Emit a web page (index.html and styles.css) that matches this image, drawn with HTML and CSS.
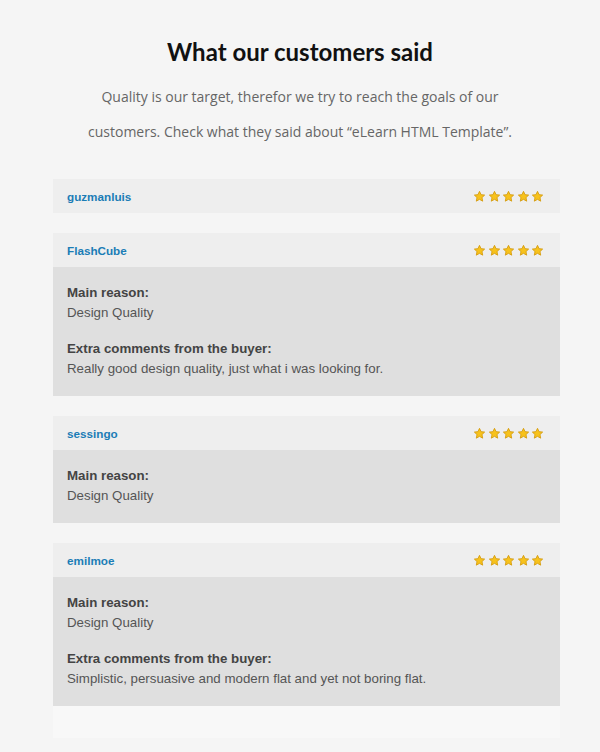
FILE: index.html
```html
<!DOCTYPE html>
<html lang="en">

<head>
    <meta charset="UTF-8">
    <meta name="viewport" content="width=device-width, initial-scale=1.0">
    <title>Testimonials</title>
    <link rel="stylesheet" href="styles.css">
</head>

<body>
    <section class="reviews">
        <h1 class="reviews-title">What our customers said</h1>
        <p class="reviews-intro">Quality is our target, therefor we try to reach the goals of our customers. Check what they said about &ldquo;eLearn HTML Template&rdquo;.</p>

        <div class="review-list">
            <div class="review">
                <div class="review-head">
                    <span class="review-name">guzmanluis</span>
                    <span class="stars">
                        <svg class="star" viewBox="0 0 24 24"><path d="M12 2.5l2.9 6.1 6.6.8-4.9 4.6 1.3 6.6L12 17.3l-5.9 3.3 1.3-6.6-4.9-4.6 6.6-.8z"/></svg>
                        <svg class="star" viewBox="0 0 24 24"><path d="M12 2.5l2.9 6.1 6.6.8-4.9 4.6 1.3 6.6L12 17.3l-5.9 3.3 1.3-6.6-4.9-4.6 6.6-.8z"/></svg>
                        <svg class="star" viewBox="0 0 24 24"><path d="M12 2.5l2.9 6.1 6.6.8-4.9 4.6 1.3 6.6L12 17.3l-5.9 3.3 1.3-6.6-4.9-4.6 6.6-.8z"/></svg>
                        <svg class="star" viewBox="0 0 24 24"><path d="M12 2.5l2.9 6.1 6.6.8-4.9 4.6 1.3 6.6L12 17.3l-5.9 3.3 1.3-6.6-4.9-4.6 6.6-.8z"/></svg>
                        <svg class="star" viewBox="0 0 24 24"><path d="M12 2.5l2.9 6.1 6.6.8-4.9 4.6 1.3 6.6L12 17.3l-5.9 3.3 1.3-6.6-4.9-4.6 6.6-.8z"/></svg>
                    </span>
                </div>
            </div>

            <div class="review">
                <div class="review-head">
                    <span class="review-name">FlashCube</span>
                    <span class="stars">
                        <svg class="star" viewBox="0 0 24 24"><path d="M12 2.5l2.9 6.1 6.6.8-4.9 4.6 1.3 6.6L12 17.3l-5.9 3.3 1.3-6.6-4.9-4.6 6.6-.8z"/></svg>
                        <svg class="star" viewBox="0 0 24 24"><path d="M12 2.5l2.9 6.1 6.6.8-4.9 4.6 1.3 6.6L12 17.3l-5.9 3.3 1.3-6.6-4.9-4.6 6.6-.8z"/></svg>
                        <svg class="star" viewBox="0 0 24 24"><path d="M12 2.5l2.9 6.1 6.6.8-4.9 4.6 1.3 6.6L12 17.3l-5.9 3.3 1.3-6.6-4.9-4.6 6.6-.8z"/></svg>
                        <svg class="star" viewBox="0 0 24 24"><path d="M12 2.5l2.9 6.1 6.6.8-4.9 4.6 1.3 6.6L12 17.3l-5.9 3.3 1.3-6.6-4.9-4.6 6.6-.8z"/></svg>
                        <svg class="star" viewBox="0 0 24 24"><path d="M12 2.5l2.9 6.1 6.6.8-4.9 4.6 1.3 6.6L12 17.3l-5.9 3.3 1.3-6.6-4.9-4.6 6.6-.8z"/></svg>
                    </span>
                </div>
                <div class="review-body">
                    <p class="label">Main reason:</p>
                    <p class="value">Design Quality</p>
                    <p class="label">Extra comments from the buyer:</p>
                    <p class="value">Really good design quality, just what i was looking for.</p>
                </div>
            </div>

            <div class="review">
                <div class="review-head">
                    <span class="review-name">sessingo</span>
                    <span class="stars">
                        <svg class="star" viewBox="0 0 24 24"><path d="M12 2.5l2.9 6.1 6.6.8-4.9 4.6 1.3 6.6L12 17.3l-5.9 3.3 1.3-6.6-4.9-4.6 6.6-.8z"/></svg>
                        <svg class="star" viewBox="0 0 24 24"><path d="M12 2.5l2.9 6.1 6.6.8-4.9 4.6 1.3 6.6L12 17.3l-5.9 3.3 1.3-6.6-4.9-4.6 6.6-.8z"/></svg>
                        <svg class="star" viewBox="0 0 24 24"><path d="M12 2.5l2.9 6.1 6.6.8-4.9 4.6 1.3 6.6L12 17.3l-5.9 3.3 1.3-6.6-4.9-4.6 6.6-.8z"/></svg>
                        <svg class="star" viewBox="0 0 24 24"><path d="M12 2.5l2.9 6.1 6.6.8-4.9 4.6 1.3 6.6L12 17.3l-5.9 3.3 1.3-6.6-4.9-4.6 6.6-.8z"/></svg>
                        <svg class="star" viewBox="0 0 24 24"><path d="M12 2.5l2.9 6.1 6.6.8-4.9 4.6 1.3 6.6L12 17.3l-5.9 3.3 1.3-6.6-4.9-4.6 6.6-.8z"/></svg>
                    </span>
                </div>
                <div class="review-body">
                    <p class="label">Main reason:</p>
                    <p class="value">Design Quality</p>
                </div>
            </div>

            <div class="review">
                <div class="review-head">
                    <span class="review-name">emilmoe</span>
                    <span class="stars">
                        <svg class="star" viewBox="0 0 24 24"><path d="M12 2.5l2.9 6.1 6.6.8-4.9 4.6 1.3 6.6L12 17.3l-5.9 3.3 1.3-6.6-4.9-4.6 6.6-.8z"/></svg>
                        <svg class="star" viewBox="0 0 24 24"><path d="M12 2.5l2.9 6.1 6.6.8-4.9 4.6 1.3 6.6L12 17.3l-5.9 3.3 1.3-6.6-4.9-4.6 6.6-.8z"/></svg>
                        <svg class="star" viewBox="0 0 24 24"><path d="M12 2.5l2.9 6.1 6.6.8-4.9 4.6 1.3 6.6L12 17.3l-5.9 3.3 1.3-6.6-4.9-4.6 6.6-.8z"/></svg>
                        <svg class="star" viewBox="0 0 24 24"><path d="M12 2.5l2.9 6.1 6.6.8-4.9 4.6 1.3 6.6L12 17.3l-5.9 3.3 1.3-6.6-4.9-4.6 6.6-.8z"/></svg>
                        <svg class="star" viewBox="0 0 24 24"><path d="M12 2.5l2.9 6.1 6.6.8-4.9 4.6 1.3 6.6L12 17.3l-5.9 3.3 1.3-6.6-4.9-4.6 6.6-.8z"/></svg>
                    </span>
                </div>
                <div class="review-body">
                    <p class="label">Main reason:</p>
                    <p class="value">Design Quality</p>
                    <p class="label">Extra comments from the buyer:</p>
                    <p class="value">Simplistic, persuasive and modern flat and yet not boring flat.</p>
                </div>
            </div>

            <div class="reviews-more"></div>
        </div>
    </section>
</body>

</html>
```

FILE: styles.css
```css
body {
    margin: 0;
    background-color: #f5f5f5;
    font-family: 'Liberation Sans', Arial, sans-serif;
}

.reviews {
    padding: 38px 0 15px;
}

.reviews-title {
    margin: 0;
    text-align: center;
    font-family: Lato, 'Open Sans', sans-serif;
    font-size: 24px;
    font-weight: 700;
    color: #111;
    line-height: 28px;
}

.reviews-intro {
    max-width: 440px;
    margin: 13px auto 30px;
    text-align: center;
    font-family: 'Open Sans', Lato, sans-serif;
    font-size: 14px;
    line-height: 35px;
    color: #666;
}

.review-list {
    width: 507px;
    margin-left: 53px;
}

.review {
    margin-bottom: 20px;
}

.review-head {
    display: flex;
    align-items: center;
    justify-content: space-between;
    height: 34px;
    padding: 0 16px 0 14px;
    background-color: #eeeeee;
}

.review-name {
    font-size: 11.7px;
    font-weight: bold;
    color: #1b7db6;
}

.stars {
    display: flex;
    gap: 1.5px;
}

.star {
    width: 13px;
    height: 13px;
    fill: #f7c21c;
    stroke: #d49a0b;
    stroke-width: 1.6;
    stroke-linejoin: round;
}

.review-body {
    padding: 16px 14px 17px;
    background-color: #dfdfdf;
}

.review-body p {
    margin: 0;
    font-size: 13.3px;
    line-height: 20px;
}

.label {
    font-weight: bold;
    color: #444;
}

.value {
    color: #555;
}

.value + .label {
    margin-top: 16px;
}

.reviews-more {
    height: 32px;
    margin-top: -20px;
    background-color: #f8f8f8;
}
```
